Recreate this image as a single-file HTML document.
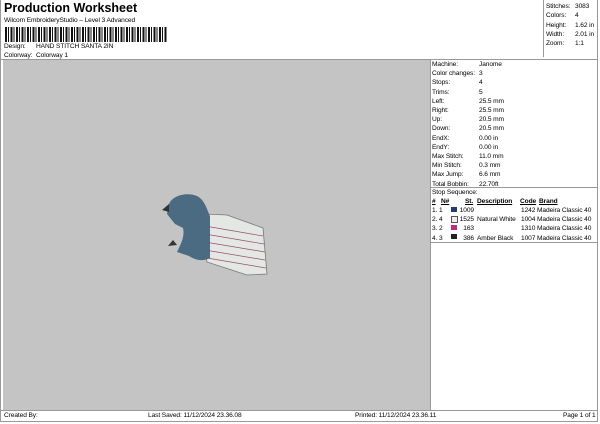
<html><head><style>
body{margin:0;width:600px;height:424px;background:#fff;position:relative;overflow:hidden;font-family:"Liberation Sans",sans-serif;font-size:6.6px;letter-spacing:-0.1px;color:#000}
.a{position:absolute;white-space:nowrap;line-height:9px}
.g{position:absolute;left:3px;top:60px;width:427px;height:350px;background:#c4c4c4}
.l{position:absolute;background:#999}
</style></head><body>
<div class="a" style="left:4px;top:1px;font-size:12.5px;letter-spacing:0;font-weight:bold;line-height:14px">Production Worksheet</div>
<div class="a" style="left:4px;top:16px">Wilcom EmbroideryStudio – Level 3 Advanced</div>
<div class="a" style="left:5px;top:27px;width:162px;height:15px;background:repeating-linear-gradient(90deg,#111 0 2px,#fff 2px 3px,#111 3px 4px,#fff 4px 5.5px)"></div>
<div class="a" style="left:4px;top:42px">Design:</div><div class="a" style="left:36px;top:42px">HAND STITCH SANTA 2IN</div>
<div class="a" style="left:4px;top:51px">Colorway:</div><div class="a" style="left:36px;top:51px">Colorway 1</div>
<div class="l" style="left:543px;top:0;width:1px;height:57px"></div>
<div class="l" style="left:597px;top:0;width:1px;height:421px"></div>
<div class="l" style="left:0;top:59px;width:598px;height:1px"></div>
<div class="a" style="left:546px;top:2px;line-height:9.3px">Stitches:<br>Colors:<br>Height:<br>Width:<br>Zoom:</div>
<div class="a" style="left:575px;top:2px;line-height:9.3px">3083<br>4<br>1.62 in<br>2.01 in<br>1:1</div>
<div class="g"></div>
<div class="l" style="left:430px;top:60px;width:1px;height:350px"></div>
<div class="a" style="left:432px;top:60px;line-height:9.2px">Machine:<br>Color changes:<br>Stops:<br>Trims:<br>Left:<br>Right:<br>Up:<br>Down:<br>EndX:<br>EndY:<br>Max Stitch:<br>Min Stitch:<br>Max Jump:<br>Total Bobbin:</div>
<div class="a" style="left:479px;top:60px;line-height:9.2px">Janome<br>3<br>4<br>5<br>25.5 mm<br>25.5 mm<br>20.5 mm<br>20.5 mm<br>0.00 in<br>0.00 in<br>11.0 mm<br>0.3 mm<br>6.6 mm<br>22.70ft</div>
<div class="l" style="left:430px;top:187px;width:168px;height:1px"></div>
<div class="a" style="left:432px;top:188px">Stop Sequence:</div>
<div class="a" style="left:432px;top:197px;font-weight:bold;text-decoration:underline">#</div>
<div class="a" style="left:441px;top:197px;font-weight:bold;text-decoration:underline">N#</div>
<div class="a" style="left:465px;top:197px;font-weight:bold;text-decoration:underline">St.</div>
<div class="a" style="left:477px;top:197px;font-weight:bold;text-decoration:underline">Description</div>
<div class="a" style="left:520px;top:197px;font-weight:bold;text-decoration:underline">Code</div>
<div class="a" style="left:539px;top:197px;font-weight:bold;text-decoration:underline">Brand</div>
<div class="a" style="left:432px;top:206px;line-height:9.2px">1. 1<br>2. 4<br>3. 2<br>4. 3</div>
<div class="a" style="left:451px;top:207px;width:6px;height:5px;background:#1e3f6e"></div>
<div class="a" style="left:451px;top:216px;width:5px;height:5px;border:0.5px solid #555;background:#eee"></div>
<div class="a" style="left:451px;top:225px;width:6px;height:5px;background:#c02a80"></div>
<div class="a" style="left:451px;top:234px;width:6px;height:5px;background:#222"></div>
<div class="a" style="left:459px;top:206px;line-height:9.2px;text-align:right;width:15px">1009<br>1525<br>163<br>386</div>
<div class="a" style="left:477px;top:206px;line-height:9.2px"><br>Natural White<br><br>Amber Black</div>
<div class="a" style="left:521px;top:206px;line-height:9.2px">1242 Madeira Classic 40<br>1004 Madeira Classic 40<br>1310 Madeira Classic 40<br>1007 Madeira Classic 40</div>
<div class="l" style="left:430px;top:242px;width:168px;height:1px"></div>
<svg class="a" style="left:155px;top:190px" width="120" height="95" viewBox="0 0 120 95">
<path d="M43 30 L50 24 L72 25 L108 38 L112 84 L92 85 L52 72 Z" fill="#e4e8e4" stroke="#777" stroke-width="0.8"/>
<g stroke="#a04a6a" stroke-width="0.7"><path d="M50 36 L108 46"/><path d="M50 44 L109 54"/><path d="M50 52 L110 62"/><path d="M50 60 L110 70"/><path d="M52 68 L111 78"/></g>
<path d="M14 14 C18 5 32 2 42 6 C50 10 52 20 55 26 L55 68 C48 72 40 70 34 66 L22 62 C26 54 30 46 28 38 L20 34 L12 24 Z" fill="#4a6b82"/>
<path d="M14 14 L7 20 L14 22 Z M18 50 L13 56 L22 55 Z" fill="#333"/>
</svg>
<div class="l" style="left:0;top:410px;width:598px;height:1px"></div>
<div class="l" style="left:0;top:421px;width:598px;height:1px"></div>
<div class="l" style="left:0;top:0;width:1px;height:421px"></div>
<div class="a" style="left:4px;top:411px">Created By:</div>
<div class="a" style="left:148px;top:411px">Last Saved: 11/12/2024 23.36.08</div>
<div class="a" style="left:355px;top:411px">Printed: 11/12/2024 23.36.11</div>
<div class="a" style="left:563px;top:411px">Page 1 of 1</div>
</body></html>
